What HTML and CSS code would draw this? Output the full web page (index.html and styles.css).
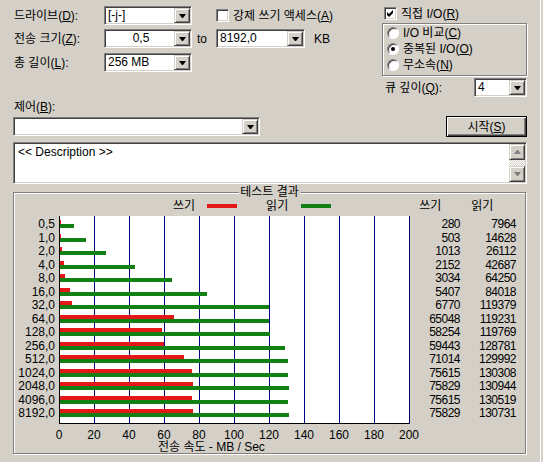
FILE: index.html
```html
<!DOCTYPE html>
<html lang="ko">

<head>
    <meta charset="UTF-8">
    <title>디스크 벤치마크</title>
    <link rel="stylesheet" href="styles.css">
</head>

<body>
<div class="window">
    <div class="top">
        <div class="settings">
            <span class="lbl">드라이브(<u>D</u>):</span>
            <div class="combo"><span class="val">[-j-]</span><span class="drop"></span></div>
            <label class="check force"><span class="box"></span>강제 쓰기 액세스(<u>A</u>)</label>

            <span class="lbl">전송 크기(<u>Z</u>):</span>
            <div class="combo"><span class="val mid">0,5</span><span class="drop"></span></div>
            <span class="to">to</span>
            <div class="combo"><span class="val">8192,0</span><span class="drop"></span></div>
            <span class="unit">KB</span>

            <span class="lbl">총 길이(<u>L</u>):</span>
            <div class="combo"><span class="val">256 MB</span><span class="drop"></span></div>
        </div>

        <div class="io">
            <label class="check"><span class="box">
                <svg width="7" height="7" viewBox="0 0 7 7"><polygon points="0,2 2,4 6,0 6,3 2,7 0,5" fill="#000"/></svg>
            </span>직접 I/O(<u>R</u>)</label>
            <div class="io-group">
                <label class="radio"><span class="circle"></span>I/O 비교(<u>C</u>)</label>
                <label class="radio"><span class="circle on"></span>중복된 I/O(<u>O</u>)</label>
                <label class="radio"><span class="circle"></span>무소속(<u>N</u>)</label>
            </div>
            <div class="queue">
                <span>큐 깊이(<u>Q</u>):</span>
                <div class="combo small"><span class="val">4</span><span class="drop"></span></div>
            </div>
        </div>
    </div>

    <div class="ctl-label">제어(<u>B</u>):</div>
    <div class="ctl-row">
        <div class="combo wide"><span class="val"></span><span class="drop"></span></div>
        <button class="start">시작(<u>S</u>)</button>
    </div>

    <div class="desc">
        <span class="desc-text">&lt;&lt; Description &gt;&gt;</span>
        <div class="scroll">
            <span class="sbtn up"></span>
            <span class="track"></span>
            <span class="sbtn down"></span>
        </div>
    </div>

    <div class="results">
        <span class="results-title">테스트 결과</span>
        <div class="legend">
            <span class="l-write">쓰기</span>
            <span class="swatch red"></span>
            <span class="l-read">읽기</span>
            <span class="swatch green"></span>
            <span class="h-write">쓰기</span>
            <span class="h-read">읽기</span>
        </div>
        <div class="data">
            <div class="sizes" id="sizes"></div>
            <div class="plot" id="plot"></div>
            <div class="nums w" id="wnums"></div>
            <div class="nums r" id="rnums"></div>
        </div>
        <div class="ticks" id="ticks"></div>
        <div class="axis-title">전송 속도 - MB / Sec</div>
    </div>
</div>

<script>
    // 결과 데이터 (KB/s)
    const sizes = ['0,5', '1,0', '2,0', '4,0', '8,0', '16,0', '32,0', '64,0', '128,0', '256,0', '512,0', '1024,0', '2048,0', '4096,0', '8192,0']
    const write = [280, 503, 1013, 2152, 3034, 5407, 6770, 65048, 58254, 59443, 71014, 75615, 75829, 75615, 75829]
    const read = [7964, 14628, 26112, 42687, 64250, 84018, 119379, 119231, 119769, 128781, 129992, 130308, 130944, 130519, 130731]

    // 200 MB/s = 350px
    const px = kb => (kb / 1000 * 1.75).toFixed(1) + 'px'

    const sizeBox = document.getElementById('sizes')
    const plot = document.getElementById('plot')
    const wnums = document.getElementById('wnums')
    const rnums = document.getElementById('rnums')

    for (let i = 0; i < sizes.length; i++) {
        sizeBox.innerHTML += '<div class="cell">' + sizes[i] + '</div>'
        wnums.innerHTML += '<div class="cell">' + write[i] + '</div>'
        rnums.innerHTML += '<div class="cell">' + read[i] + '</div>'
        plot.innerHTML += '<div class="row"><div class="bar red" style="width:' + px(write[i]) + '"></div>'
            + '<div class="bar green" style="width:' + px(read[i]) + '"></div></div>'
    }

    const ticks = document.getElementById('ticks')
    for (let v = 0; v <= 200; v += 20) {
        ticks.innerHTML += '<span>' + v + '</span>'
    }
</script>
</body>

</html>
```

FILE: styles.css
```css
* {
    margin: 0;
    padding: 0;
    box-sizing: border-box;
}
body {
    background-color: #d4d0c8;
    font: 12px/14px "Liberation Sans", "Noto Sans CJK KR", sans-serif;
    color: #000;
}
.window {
    width: 541px;
    height: 462px;
    border-right: 1px solid #fff;
}

/* top settings */
.top {
    display: flex;
    justify-content: space-between;
    padding: 6px 13px 0 14px;
}
.settings {
    display: grid;
    grid-template-columns: 90px 88px 24px 89px auto;
    grid-template-rows: 19px 20px 19px;
    row-gap: 4px;
    align-items: center;
}
.settings .combo {
    align-self: start;
}
.to {
    padding-left: 5px;
}
.unit {
    padding-left: 9px;
}
.force {
    grid-column: 4 / span 2;
}

.combo {
    display: flex;
    height: 19px;
    background: #fff;
    border: 1px solid;
    border-color: #808080 #fff #fff #808080;
    box-shadow: inset 1px 1px #404040, inset -1px -1px #d4d0c8;
    padding: 1px;
}
.combo .val {
    flex: 1;
    padding-left: 2px;
    line-height: 15px;
    white-space: nowrap;
}
.combo .val.mid {
    text-align: center;
}
.drop {
    width: 16px;
    height: 15px;
    background: #d4d0c8;
    border: 1px solid;
    border-color: #d4d0c8 #404040 #404040 #d4d0c8;
    box-shadow: inset 1px 1px #fff, inset -1px -1px #808080;
    display: flex;
    align-items: center;
    justify-content: center;
}
.drop::after {
    content: "";
    width: 1px;
    border-top: 4px solid #000;
    border-left: 3px solid transparent;
    border-right: 3px solid transparent;
    box-sizing: content-box;
}

.check, .radio {
    display: flex;
    align-items: center;
    white-space: nowrap;
}
.check .box {
    width: 13px;
    height: 13px;
    margin-right: 4px;
    background: #fff;
    border: 1px solid;
    border-color: #808080 #fff #fff #808080;
    box-shadow: inset 1px 1px #404040, inset -1px -1px #d4d0c8;
    display: flex;
    align-items: center;
    justify-content: center;
}

.io {
    width: 145px;
}
.io > .check {
    height: 15px;
    padding-left: 2px;
}
.io-group {
    margin-top: 2px;
    height: 53px;
    padding: 1px 0 0 4px;
    border: 1px solid #808080;
    box-shadow: inset 1px 1px #fff, 1px 1px #fff;
}
.radio {
    height: 16px;
}
.circle {
    width: 12px;
    height: 12px;
    margin-right: 4px;
    border-radius: 50%;
    background: #fff;
    border: 1px solid;
    border-color: #808080 #fff #fff #808080;
    box-shadow: inset 1px 1px #404040;
    display: flex;
    align-items: center;
    justify-content: center;
}
.circle.on::after {
    content: "";
    width: 4px;
    height: 4px;
    border-radius: 50%;
    background: #000;
}
.queue {
    margin-top: 2px;
    display: flex;
    align-items: center;
    justify-content: space-between;
    padding-left: 3px;
}
.combo.small {
    width: 53px;
}

/* control row */
.ctl-label {
    margin: 3px 0 0 14px;
}
.ctl-row {
    display: flex;
    justify-content: space-between;
    align-items: flex-start;
    margin-top: 3px;
    padding: 0 13px 0 13px;
}
.combo.wide {
    width: 247px;
}
.start {
    width: 81px;
    height: 21px;
    margin-top: -1px;
    font: inherit;
    background: #d4d0c8;
    border: 1px solid #000;
    box-shadow: inset 1px 1px #fff, inset -1px -1px #404040, inset -2px -2px #808080;
}

/* description */
.desc {
    display: flex;
    justify-content: space-between;
    margin: 5px 0 0 13px;
    width: 514px;
    height: 42px;
    background: #fff;
    border: 1px solid;
    border-color: #808080 #fff #fff #808080;
    box-shadow: inset 1px 1px #404040, inset -1px -1px #d4d0c8;
    padding: 1px;
}
.desc-text {
    padding: 1px 0 0 3px;
}
.scroll {
    width: 16px;
    display: flex;
    flex-direction: column;
}
.track {
    flex: 1;
    background: repeating-conic-gradient(#fff 0 25%, #d4d0c8 0 50%) 0 0 / 2px 2px;
}
.sbtn {
    height: 16px;
    background: #d4d0c8;
    border: 1px solid;
    border-color: #d4d0c8 #404040 #404040 #d4d0c8;
    box-shadow: inset 1px 1px #fff, inset -1px -1px #808080;
    display: flex;
    align-items: center;
    justify-content: center;
}
.sbtn::after {
    content: "";
    width: 1px;
    border-left: 3px solid transparent;
    border-right: 3px solid transparent;
    box-sizing: content-box;
}
.sbtn.up::after {
    border-bottom: 4px solid #808080;
}
.sbtn.down::after {
    border-top: 4px solid #808080;
}

/* results */
.results {
    position: relative;
    margin: 8px 0 0 13px;
    width: 513px;
    height: 262px;
    padding-top: 6px;
    border: 1px solid #808080;
    box-shadow: inset 1px 1px #fff, 1px 1px #fff;
}
.results-title {
    position: absolute;
    top: -8px;
    left: 50%;
    transform: translateX(-50%);
    padding: 0 2px;
    background: #d4d0c8;
}
.legend {
    display: flex;
    align-items: center;
    height: 14px;
    white-space: nowrap;
}
.l-write {
    margin-left: 159px;
}
.swatch {
    width: 30px;
    height: 4px;
}
.swatch.red {
    margin-left: 12px;
    background: #e41818;
}
.swatch.green {
    margin-left: 13px;
    background: #128012;
}
.l-read {
    margin-left: 29px;
}
.h-write {
    margin-left: 88px;
}
.h-read {
    margin-left: 30px;
}

.data {
    display: flex;
    margin-top: 3px;
}
.sizes, .nums {
    padding-top: 4px;
    text-align: right;
}
.sizes {
    width: 45px;
    padding-right: 4px;
}
.nums.w {
    width: 50px;
}
.nums.r {
    width: 56px;
}
.cell {
    height: 13.5px;
    line-height: 8px;
    white-space: nowrap;
}
.nums .cell {
    letter-spacing: -0.5px;
}
.plot {
    width: 351px;
    padding-top: 4px;
    border-left: 1px solid #000;
    border-right: 1px solid #000060;
    border-bottom: 1px solid #000;
    background: #fff repeating-linear-gradient(to right, transparent 0 34px, #000080 34px 35px);
}
.row {
    height: 13.5px;
}
.bar {
    height: 4px;
}
.bar.red {
    background: #e41818;
}
.bar.green {
    background: #128012;
}

.ticks {
    display: flex;
    margin: 5px 0 0 27.5px;
    height: 12px;
    line-height: 12px;
}
.ticks span {
    width: 35px;
    flex: none;
    text-align: center;
}
.axis-title {
    padding-left: 144px;
    line-height: 12px;
}
```
